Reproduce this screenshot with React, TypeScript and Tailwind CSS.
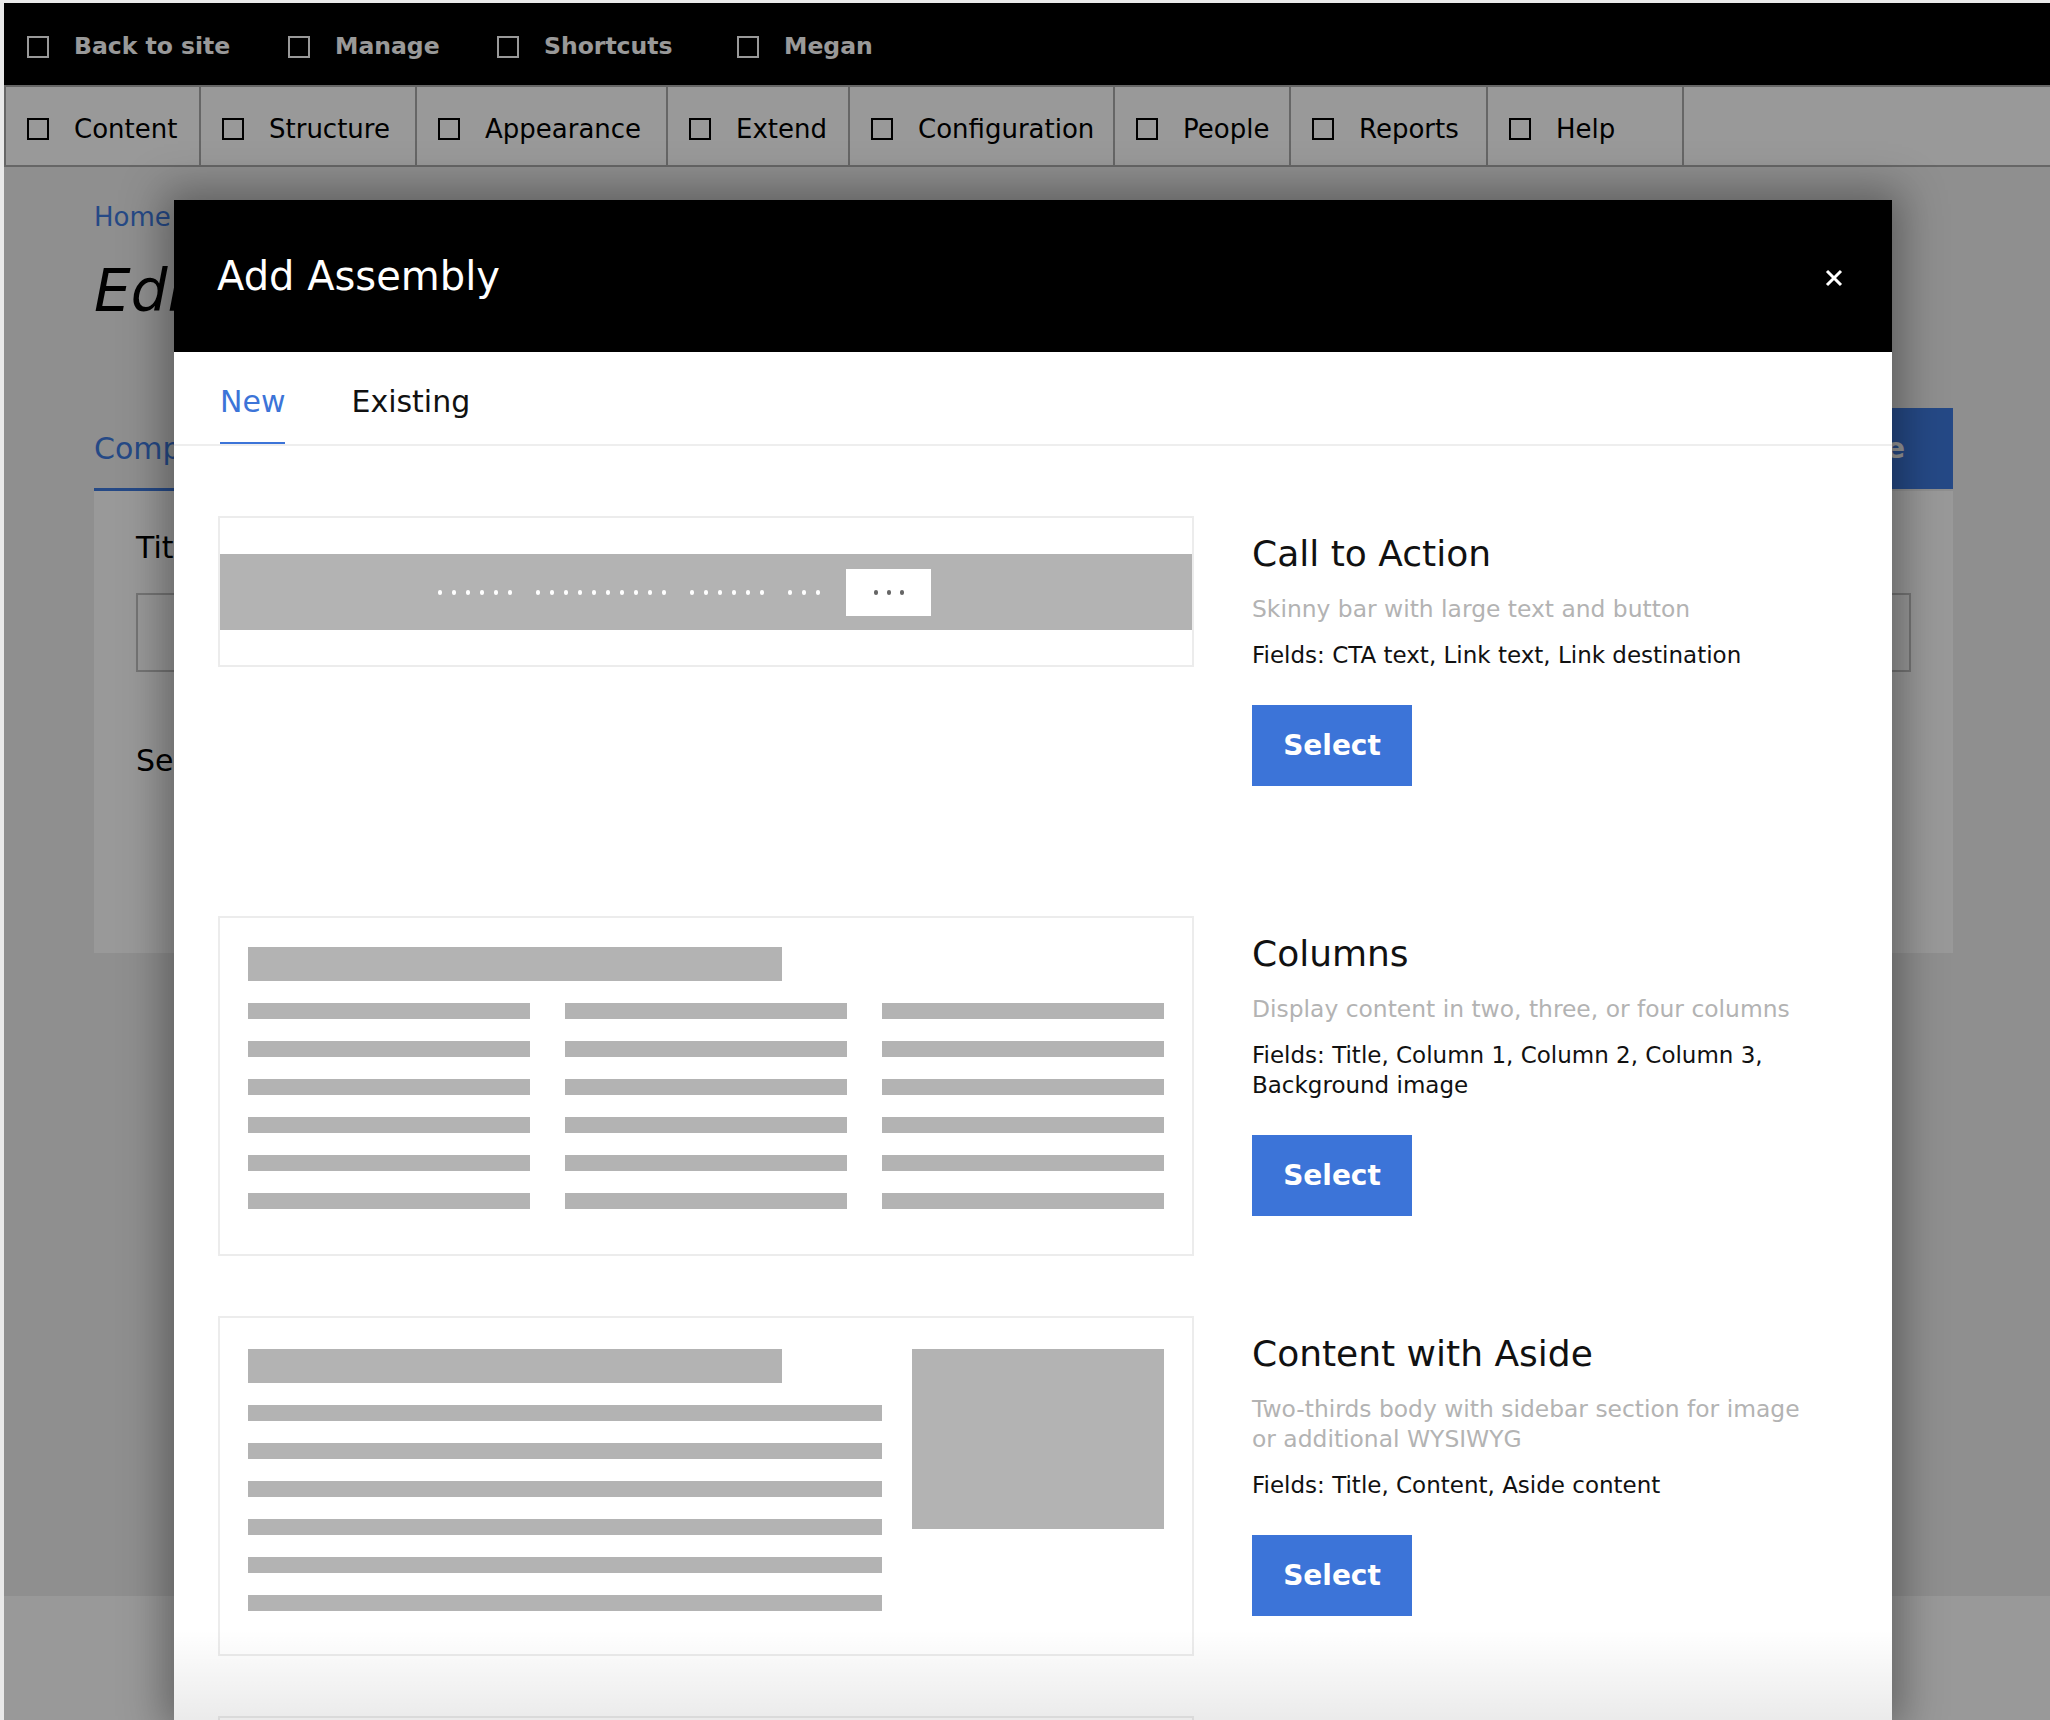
import React from 'react';

const topItems = [
  { label: 'Back to site', width: 'w-[261px]' },
  { label: 'Manage', width: 'w-[209px]' },
  { label: 'Shortcuts', width: 'w-[240px]' },
  { label: 'Megan', width: 'w-[200px]' },
];

const navItems = [
  { label: 'Content', width: 'w-[195px]' },
  { label: 'Structure', width: 'w-[216px]' },
  { label: 'Appearance', width: 'w-[251px]' },
  { label: 'Extend', width: 'w-[182px]' },
  { label: 'Configuration', width: 'w-[265px]' },
  { label: 'People', width: 'w-[176px]' },
  { label: 'Reports', width: 'w-[197px]' },
  { label: 'Help', width: 'w-[196px]' },
];

// placeholder "text" in the CTA preview, one entry per word
const dotGroups = [6, 10, 6, 3];

const TopBar = () => (
  <div className="flex h-[84px] items-center border-b-2 border-[#aaaaaa] bg-black pl-[23px] pt-[5px]">
    {topItems.map((item) => (
      <div key={item.label} className={`flex items-center gap-[25px] ${item.width}`}>
        <span className="block h-[22px] w-[22px] border-2 border-white" />
        <span className="text-[23.5px] font-bold text-white">{item.label}</span>
      </div>
    ))}
  </div>
);

const NavBar = () => (
  <div className="flex h-[80px] border-b-2 border-l-2 border-[#aaaaaa] bg-white">
    {navItems.map((item) => (
      <div
        key={item.label}
        className={`flex items-center gap-[25px] border-r-2 border-[#aaaaaa] pl-[21px] pt-[6px] ${item.width}`}
      >
        <span className="block h-[22px] w-[22px] border-2 border-black" />
        <span className="text-[26px] text-black">{item.label}</span>
      </div>
    ))}
  </div>
);

const PageBody = () => (
  <div className="pl-[90px] pr-[97px]">
    <div className="mt-[32px] text-[26px] leading-[36px] text-[#3f7be0]">Home</div>
    <h1 className="mt-[21px] text-[58px] italic leading-[70px] text-black">Edit</h1>
    <div className="mt-[82px] flex h-[83px] items-end justify-between">
      <div className="border-b-[3px] border-[#3f7be0] pb-[21px] text-[30px] leading-[36px] text-[#3f7be0]">
        Components
      </div>
      <button className="mb-[2px] flex h-[81px] items-center bg-[#3f7be0] px-[48px] text-[28px] font-bold text-white">
        Save
      </button>
    </div>
    <div className="h-[462px] bg-white px-[42px] pt-[37px]">
      <div className="text-[30px] leading-[40px] text-black">Title</div>
      <div className="mt-[25px] h-[79px] border-2 border-[#c4c4c4] bg-white" />
      <div className="mt-[69px] text-[30px] leading-[40px] text-black">Sections</div>
    </div>
  </div>
);

const Bar = ({ className }: { className: string }) => <div className={`bg-[#b3b3b3] ${className}`} />;

const CtaPreview = () => (
  <div className="h-[151px] w-[976px] shrink-0 border-2 border-[#ececec]">
    <div className="mt-[36px] flex h-[76px] items-center bg-[#b3b3b3] pl-[218px]">
      <div className="flex items-center gap-[24px]">
        {dotGroups.map((count, gi) => (
          <div key={gi} className="flex items-center gap-[10px]">
            {Array.from({ length: count }).map((_, i) => (
              <span key={i} className="block h-[5px] w-[4px] rounded-full bg-white" />
            ))}
          </div>
        ))}
      </div>
      <div className="ml-[26px] flex h-[47px] w-[85px] items-center justify-center gap-[9px] bg-white">
        <span className="block h-[5px] w-[4px] rounded-full bg-[#666666]" />
        <span className="block h-[5px] w-[4px] rounded-full bg-[#666666]" />
        <span className="block h-[5px] w-[4px] rounded-full bg-[#666666]" />
      </div>
    </div>
  </div>
);

const ColumnsPreview = () => (
  <div className="h-[340px] w-[976px] shrink-0 border-2 border-[#ececec] px-[28px] pt-[29px]">
    <Bar className="h-[34px] w-[534px]" />
    <div className="mt-[22px] grid grid-cols-3 gap-x-[35px] gap-y-[22px]">
      {Array.from({ length: 18 }).map((_, i) => (
        <Bar key={i} className="h-[16px]" />
      ))}
    </div>
  </div>
);

const AsidePreview = () => (
  <div className="flex h-[340px] w-[976px] shrink-0 gap-[30px] border-2 border-[#ececec] px-[28px] pt-[31px]">
    <div className="w-[634px]">
      <Bar className="h-[34px] w-[534px]" />
      <div className="mt-[22px] flex flex-col gap-[22px]">
        {Array.from({ length: 6 }).map((_, i) => (
          <Bar key={i} className="h-[16px] w-full" />
        ))}
      </div>
    </div>
    <Bar className="h-[180px] w-[252px]" />
  </div>
);

const Details = ({ title, description, fields }: { title: string; description: string; fields: string }) => (
  <div className="ml-[58px] w-[570px] pt-[16px]">
    <h3 className="text-[36px] leading-[44px] text-[#111111]">{title}</h3>
    <p className="mt-[18px] text-[23.4px] leading-[30px] text-[#b3b3b3]">{description}</p>
    <p className="mt-[16px] text-[23px] leading-[30px] text-[#111111]">{fields}</p>
    <button className="mt-[35px] h-[81px] w-[160px] bg-[#3c74d8] text-[28px] font-bold text-white">Select</button>
  </div>
);

const Modal = () => (
  <div className="absolute left-[170px] top-[197px] h-[1520px] w-[1718px] overflow-hidden bg-white shadow-[0_0_40px_10px_rgba(0,0,0,0.35)]">
    <div className="flex h-[152px] items-center justify-between bg-black pl-[43px] pr-[49px]">
      <h2 className="text-[40px] leading-none text-white">Add Assembly</h2>
      <svg width="18" height="18" viewBox="0 0 18 18" className="mt-[3px]">
        <path d="M2 2L16 16M16 2L2 16" stroke="white" strokeWidth="3" />
      </svg>
    </div>
    <div className="flex h-[94px] items-end gap-[66px] border-b-2 border-[#eeeeee] pl-[46px]">
      <div className="border-b-2 border-[#3c74d8] pb-[22px] text-[30px] leading-[36px] text-[#3c74d8]">New</div>
      <div className="pb-[24px] text-[30px] leading-[36px] text-[#111111]">Existing</div>
    </div>
    <div className="flex flex-col gap-[60px] px-[44px] pt-[70px]">
      <div className="flex h-[340px] items-start">
        <CtaPreview />
        <Details
          title="Call to Action"
          description="Skinny bar with large text and button"
          fields="Fields: CTA text, Link text, Link destination"
        />
      </div>
      <div className="flex h-[340px] items-start">
        <ColumnsPreview />
        <Details
          title="Columns"
          description="Display content in two, three, or four columns"
          fields="Fields: Title, Column 1, Column 2, Column 3, Background image"
        />
      </div>
      <div className="flex h-[340px] items-start">
        <AsidePreview />
        <Details
          title="Content with Aside"
          description="Two-thirds body with sidebar section for image or additional WYSIWYG"
          fields="Fields: Title, Content, Aside content"
        />
      </div>
      <div className="flex h-[340px] items-start">
        <div className="h-[340px] w-[976px] shrink-0 border-2 border-[#ececec]" />
      </div>
    </div>
    <div className="pointer-events-none absolute bottom-0 left-0 right-0 h-[90px] bg-linear-to-b from-transparent to-black/[0.08]" />
  </div>
);

export default function App() {
  return (
    <div className="relative h-[1720px] w-full overflow-hidden bg-[#e9e9e9] pl-[4px] pt-[3px] font-['DejaVu_Sans',sans-serif]">
      <div className="relative flex h-full flex-col bg-[#eeeeee]">
        <TopBar />
        <NavBar />
        <PageBody />
        <div className="flex-1" />
        <footer className="h-[124px] bg-white" />
        <div className="absolute inset-0 bg-black/40" />
        <Modal />
      </div>
    </div>
  );
}
